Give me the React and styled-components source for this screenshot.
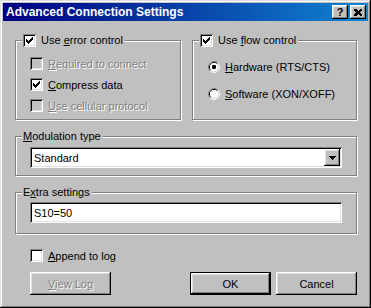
import React from 'react'
import styled, { createGlobalStyle } from 'styled-components'

const Global = createGlobalStyle`
  html, body { margin: 0; padding: 0; background: #c0c0c0; }
  * { box-sizing: border-box; }
`

const raised = `
  box-shadow: inset -1px -1px #000, inset 1px 1px #fff, inset -2px -2px #808080, inset 2px 2px #dfdfdf;
`
const sunken = `
  box-shadow: inset 1px 1px #808080, inset -1px -1px #fff, inset 2px 2px #000, inset -2px -2px #dfdfdf;
`

const Window = styled.div`
  width: 371px;
  height: 308px;
  padding: 3px;
  background: #c0c0c0;
  box-shadow: inset -1px -1px #000, inset 1px 1px #dfdfdf, inset -2px -2px #808080, inset 2px 2px #fff;
  font-family: "Liberation Sans", Arial, sans-serif;
  font-size: 11px;
  color: #000;
  display: flex;
  flex-direction: column;
`

const TitleBar = styled.div`
  height: 18px;
  display: flex;
  align-items: center;
  padding: 0 2px 0 3px;
  background: linear-gradient(to right, #000080, #1084d0);
  color: #fff;
`

const Title = styled.div`
  flex: 1;
  font-weight: bold;
  font-size: 12px;
`

const TitleButtons = styled.div`
  display: flex;
  gap: 2px;
`

const TitleButton = styled.div`
  width: 16px;
  height: 14px;
  background: #c0c0c0;
  ${raised}
  display: flex;
  align-items: center;
  justify-content: center;
  color: #000;
  font-weight: bold;
  font-size: 11px;
  line-height: 1;
`

const Body = styled.div`
  padding: 13px 11px 0 12px;
  display: flex;
  flex-direction: column;
`

const TopRow = styled.div`
  display: grid;
  grid-template-columns: 166px 165px;
  gap: 11px;
`

const Group = styled.fieldset`
  margin: ${p => p.$mt || 0}px 0 0 0;
  padding: 0;
  border: 1px solid #808080;
  box-shadow: inset 1px 1px #fff, 1px 1px #fff;
  min-width: 0;
`

const GroupBody = styled.div`
  padding: ${p => p.$pad};
  display: flex;
  flex-direction: column;
`

const Legend = styled.legend`
  margin-left: 6px;
  padding: 0 2px 0 1px;
  height: 13px;
  line-height: 13px;
  display: flex;
  align-items: center;
  gap: 5px;
  background: #c0c0c0;
`

const Option = styled.label`
  display: flex;
  align-items: center;
  gap: 5px;
  height: ${p => p.$h}px;
  color: ${p => (p.$disabled ? '#808080' : '#000')};
  text-shadow: ${p => (p.$disabled ? '1px 1px 0 #fff' : 'none')};
`

const Box = styled.span`
  width: 13px;
  height: 13px;
  flex: none;
  background: ${p => (p.$disabled ? '#c0c0c0' : '#fff')};
  ${sunken}
  display: flex;
  align-items: center;
  justify-content: center;
`

const Field = styled.div`
  height: 21px;
  background: #fff;
  ${sunken}
  display: flex;
  align-items: center;
  padding: 2px 2px 2px 4px;
`

const FieldText = styled.span`
  flex: 1;
`

const ArrowButton = styled.span`
  width: 16px;
  height: 17px;
  background: #c0c0c0;
  ${raised}
  display: flex;
  align-items: center;
  justify-content: center;
`

const BottomRow = styled.div`
  display: flex;
  align-items: center;
  gap: 5px;
  padding-left: 15px;
  margin-top: ${p => p.$mt}px;
`

const Spacer = styled.div`
  flex: 1;
`

const Button = styled.div`
  width: 81px;
  height: 23px;
  background: #c0c0c0;
  display: flex;
  align-items: center;
  justify-content: center;
  ${raised}
  ${p => p.$default && `
    box-shadow: inset 0 0 0 1px #000, inset -2px -2px #000, inset 2px 2px #fff, inset -3px -3px #808080, inset 3px 3px #dfdfdf;
  `}
  color: ${p => (p.$disabled ? '#808080' : '#000')};
  text-shadow: ${p => (p.$disabled ? '1px 1px 0 #fff' : 'none')};
`

const Key = styled.u`
  text-decoration: underline;
  text-underline-offset: 1px;
`

const CHECK = [
  '......X',
  '.....XX',
  'X...XXX',
  'XX.XXX.',
  'XXXXX..',
  '.XXX...',
  '..X....',
]

const CheckMark = ({ color }) => (
  <svg width="7" height="7" shapeRendering="crispEdges">
    {CHECK.flatMap((row, y) =>
      row.split('').map((c, x) =>
        c === 'X' ? <rect key={`${x}-${y}`} x={x} y={y} width="1" height="1" fill={color} /> : null
      )
    )}
  </svg>
)

const Check = ({ checked, disabled }) => (
  <Box $disabled={disabled}>{checked && <CheckMark color={disabled ? '#808080' : '#000'} />}</Box>
)

const Radio = ({ checked }) => (
  <svg width="12" height="12" style={{ flex: 'none' }}>
    <path d="M2.11 9.89 A5.5 5.5 0 0 1 9.89 2.11" fill="none" stroke="#808080" />
    <path d="M9.89 2.11 A5.5 5.5 0 0 1 2.11 9.89" fill="none" stroke="#fff" />
    <path d="M2.82 9.18 A4.5 4.5 0 0 1 9.18 2.82" fill="none" stroke="#000" />
    <path d="M9.18 2.82 A4.5 4.5 0 0 1 2.82 9.18" fill="none" stroke="#dfdfdf" />
    <circle cx="6" cy="6" r="4" fill="#fff" />
    {checked && <rect x="4" y="4" width="4" height="4" rx="1.2" fill="#000" />}
  </svg>
)

const App = () => {
  return (
    <Window>
      <Global />
      <TitleBar>
        <Title>Advanced Connection Settings</Title>
        <TitleButtons>
          <TitleButton>?</TitleButton>
          <TitleButton>
            <svg width="8" height="7" shapeRendering="crispEdges">
              <path d="M0 0h2l2 2 2-2h2v1l-2 2.5 2 2.5v1h-2l-2-2-2 2h-2v-1l2-2.5-2-2.5z" fill="#000" />
            </svg>
          </TitleButton>
        </TitleButtons>
      </TitleBar>

      <Body>
        <TopRow>
          <Group>
            <Legend>
              <Check checked />
              <span>Use <Key>e</Key>rror control</span>
            </Legend>
            <GroupBody $pad="6px 4px 3px 14px">
              <Option $h={21} $disabled>
                <Check disabled />
                <span><Key>R</Key>equired to connect</span>
              </Option>
              <Option $h={21}>
                <Check checked />
                <span><Key>C</Key>ompress data</span>
              </Option>
              <Option $h={21} $disabled>
                <Check disabled />
                <span><Key>U</Key>se cellular protocol</span>
              </Option>
            </GroupBody>
          </Group>

          <Group>
            <Legend>
              <Check checked />
              <span>Use <Key>f</Key>low control</span>
            </Legend>
            <GroupBody $pad="6px 4px 3px 15px">
              <Option $h={27}>
                <Radio checked />
                <span><Key>H</Key>ardware (RTS/CTS)</span>
              </Option>
              <Option $h={27}>
                <Radio />
                <span><Key>S</Key>oftware (XON/XOFF)</span>
              </Option>
            </GroupBody>
          </Group>
        </TopRow>

        <Group $mt={10}>
          <Legend>
            <span><Key>M</Key>odulation type</span>
          </Legend>
          <GroupBody $pad="4px 14px 7px 14px">
            <Field>
              <FieldText>Standard</FieldText>
              <ArrowButton>
                <svg width="7" height="4" shapeRendering="crispEdges">
                  <path d="M0 0h7v1h-1v1h-1v1h-1v1h-1v-1h-1v-1h-1v-1h-1z" fill="#000" />
                </svg>
              </ArrowButton>
            </Field>
          </GroupBody>
        </Group>

        <Group $mt={10}>
          <Legend>
            <span>E<Key>x</Key>tra settings</span>
          </Legend>
          <GroupBody $pad="3px 14px 10px 14px">
            <Field>
              <FieldText>S10=50</FieldText>
            </Field>
          </GroupBody>
        </Group>

        <BottomRow $mt={15}>
          <Option $h={13}>
            <Check />
            <span><Key>A</Key>ppend to log</span>
          </Option>
        </BottomRow>

        <BottomRow $mt={10}>
          <Button $disabled>
            <span><Key>V</Key>iew Log</span>
          </Button>
          <Spacer />
          <Button $default>OK</Button>
          <Button>Cancel</Button>
        </BottomRow>
      </Body>
    </Window>
  )
}

export default App
